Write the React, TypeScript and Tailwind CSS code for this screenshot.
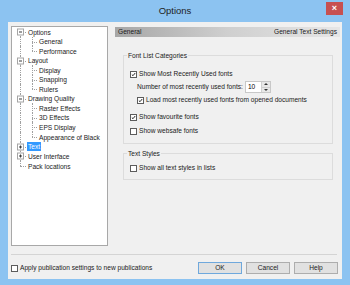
import type { ReactNode } from "react";

type TreeItem = {
  label: string;
  level: 0 | 1;
  expander?: "minus" | "plus";
  lastChild?: boolean;
  selected?: boolean;
  tall?: boolean;
};

const tree: TreeItem[] = [
  { label: "Options", level: 0, expander: "minus", tall: true },
  { label: "General", level: 1 },
  { label: "Performance", level: 1, lastChild: true, tall: true },
  { label: "Layout", level: 0, expander: "minus" },
  { label: "Display", level: 1, tall: true },
  { label: "Snapping", level: 1 },
  { label: "Rulers", level: 1, lastChild: true, tall: true },
  { label: "Drawing Quality", level: 0, expander: "minus" },
  { label: "Raster Effects", level: 1, tall: true },
  { label: "3D Effects", level: 1 },
  { label: "EPS Display", level: 1, tall: true },
  { label: "Appearance of Black", level: 1, lastChild: true, tall: true },
  { label: "Text", level: 0, expander: "plus", selected: true },
  { label: "User Interface", level: 0, expander: "plus", tall: true },
  { label: "Pack locations", level: 0, tall: true },
];

function Expander({ kind }: { kind: "minus" | "plus" }) {
  return (
    <span className="absolute left-[5px] top-1/2 z-10 flex h-[7px] w-[7px] -translate-y-1/2 items-center justify-center border border-[#a5a5a5] bg-white">
      <span className="absolute h-px w-[3px] bg-[#3c3c3c]" />
      {kind === "plus" ? <span className="absolute h-[3px] w-px bg-[#3c3c3c]" /> : null}
    </span>
  );
}

function TreeRow({ item, index }: { item: TreeItem; index: number }) {
  const isFirst = index === 0;
  const isLastRoot = index === tree.length - 1;

  return (
    <div className={`flex items-center ${item.tall ? "h-[10px]" : "h-[9px]"}`}>
      {/* root gutter: line at x=20 */}
      <span className="relative h-full w-[15px] shrink-0">
        {item.level === 1 ? (
          <span className="absolute left-[8px] top-0 h-full border-l border-dotted border-[#a0a0a0]" />
        ) : (
          <>
            {!isFirst ? <span className="absolute left-[8px] top-0 h-1/2 border-l border-dotted border-[#a0a0a0]" /> : null}
            {!isLastRoot ? <span className="absolute left-[8px] top-1/2 h-1/2 border-l border-dotted border-[#a0a0a0]" /> : null}
            <span className="absolute left-[8px] top-1/2 w-[6px] border-t border-dotted border-[#a0a0a0]" />
            {item.expander ? <Expander kind={item.expander} /> : null}
          </>
        )}
      </span>
      {item.level === 1 ? (
        <span className="relative h-full w-[11px] shrink-0">
          <span className={`absolute left-[5px] top-0 border-l border-dotted border-[#a0a0a0] ${item.lastChild ? "h-1/2" : "h-full"}`} />
          <span className="absolute left-[5px] top-1/2 w-[5px] border-t border-dotted border-[#a0a0a0]" />
        </span>
      ) : null}
      <span
        className={`whitespace-nowrap px-px leading-[9px] ${item.selected ? "bg-[#3399ff] text-white" : "text-[#1a1a1a]"}`}
      >
        {item.label}
      </span>
    </div>
  );
}

function CheckBox({ checked }: { checked?: boolean }) {
  return (
    <span className="flex h-[7px] w-[7px] shrink-0 items-center justify-center border border-[#5c5c5c] bg-white">
      {checked ? (
        <svg viewBox="0 0 7 7" className="h-[7px] w-[7px]" aria-hidden="true">
          <path d="M1.2 3.6 L2.8 5.2 L5.9 1.4" fill="none" stroke="#1a1a1a" strokeWidth="1.3" />
        </svg>
      ) : null}
    </span>
  );
}

function CheckRow({ checked, children, className = "" }: { checked?: boolean; children: ReactNode; className?: string }) {
  return (
    <div className={`flex h-[10px] items-center gap-[2px] ${className}`}>
      <CheckBox checked={checked} />
      <span className="whitespace-nowrap text-[#1a1a1a]">{children}</span>
    </div>
  );
}

function GroupBox({ title, className = "", children }: { title: string; className?: string; children: ReactNode }) {
  return (
    <div className={`relative ml-[8px] mr-[7px] border border-[#dcdcdc] ${className}`}>
      <span className="absolute -top-[5px] left-[3px] bg-[#f0f0f0] px-px leading-[9px] text-[#1a1a1a]">{title}</span>
      {children}
    </div>
  );
}

function Button({ label, primary }: { label: string; primary?: boolean }) {
  return (
    <button
      type="button"
      className={`flex h-[12px] w-[44px] items-center justify-center border bg-[#e1e1e1] leading-none text-[#1a1a1a] ${primary ? "border-[#6fa8dc]" : "border-[#adadad]"}`}
    >
      {label}
    </button>
  );
}

export default function App() {
  return (
    <div className="flex h-[285px] w-[350px] flex-col bg-[#8cc3f1] font-['Liberation_Sans',sans-serif] text-[6.6px]">
      <div className="relative flex h-[22px] shrink-0 items-center justify-center">
        <span className="text-[9.5px] text-[#1e1e1e]">Options</span>
        <span className="absolute right-[7px] top-[2px] flex h-[13px] w-[17px] items-center justify-center bg-[#c75050] text-[9px] font-bold leading-none text-white">
          ×
        </span>
      </div>

      <div className="mx-[8px] flex h-[257px] flex-col bg-[#f0f0f0]">
        <div className="flex h-[224px] pl-[3px] pr-[2px] pt-[4px]">
          <div className="h-[220px] w-[97px] shrink-0 overflow-hidden border border-[#a8a8a8] bg-white">
            {tree.map((item, i) => (
              <TreeRow item={item} index={i} key={item.label} />
            ))}
          </div>

          <div className="ml-[7px] mt-px flex flex-1 flex-col">
            <div className="flex h-[10px] items-center justify-between bg-gradient-to-r from-[#a6a6a6] via-[#cfcfcf] to-[#e6e6e6] px-[3px] text-[#1a1a1a]">
              <span>General</span>
              <span>General Text Settings</span>
            </div>

            <GroupBox title="Font List Categories" className="mt-[18px] h-[89px] pl-[6px] pt-[13px]">
              <CheckRow checked>Show Most Recently Used fonts</CheckRow>
              <div className="mt-[2px] flex h-[12px] items-center pl-[7px]">
                <span className="whitespace-nowrap text-[#1a1a1a]">Number of most recently used fonts:</span>
                <span className="ml-[2px] flex h-[12px] w-[26px] border border-[#c8c8c8] bg-white">
                  <span className="flex flex-1 items-center pl-[2px] leading-none">10</span>
                  <span className="flex w-[9px] flex-col border-l border-[#d0d0d0] bg-[#e8e8e8]">
                    <span className="flex flex-1 items-center justify-center border-b border-[#d0d0d0]">
                      <span className="h-0 w-0 border-x-[2px] border-b-[2px] border-x-transparent border-b-[#333]" />
                    </span>
                    <span className="flex flex-1 items-center justify-center">
                      <span className="h-0 w-0 border-x-[2px] border-t-[2px] border-x-transparent border-t-[#333]" />
                    </span>
                  </span>
                </span>
              </div>
              <CheckRow checked className="mt-[2px] pl-[7px]">
                Load most recently used fonts from opened documents
              </CheckRow>
              <CheckRow checked className="mt-[7px]">
                Show favourite fonts
              </CheckRow>
              <CheckRow className="mt-[4px]">Show websafe fonts</CheckRow>
            </GroupBox>

            <GroupBox title="Text Styles" className="mt-[9px] h-[27px] pl-[6px] pt-[9px]">
              <CheckRow>Show all text styles in lists</CheckRow>
            </GroupBox>
          </div>
        </div>

        <div className="ml-[3px] mr-[5px] mt-[8px] h-px bg-[#d4d4d4]" />

        <div className="mt-[7px] flex h-[12px] items-center justify-between pl-[3px] pr-[4px]">
          <CheckRow>Apply publication settings to new publications</CheckRow>
          <div className="flex gap-[4px]">
            <Button label="OK" primary />
            <Button label="Cancel" />
            <Button label="Help" />
          </div>
        </div>
      </div>
    </div>
  );
}
